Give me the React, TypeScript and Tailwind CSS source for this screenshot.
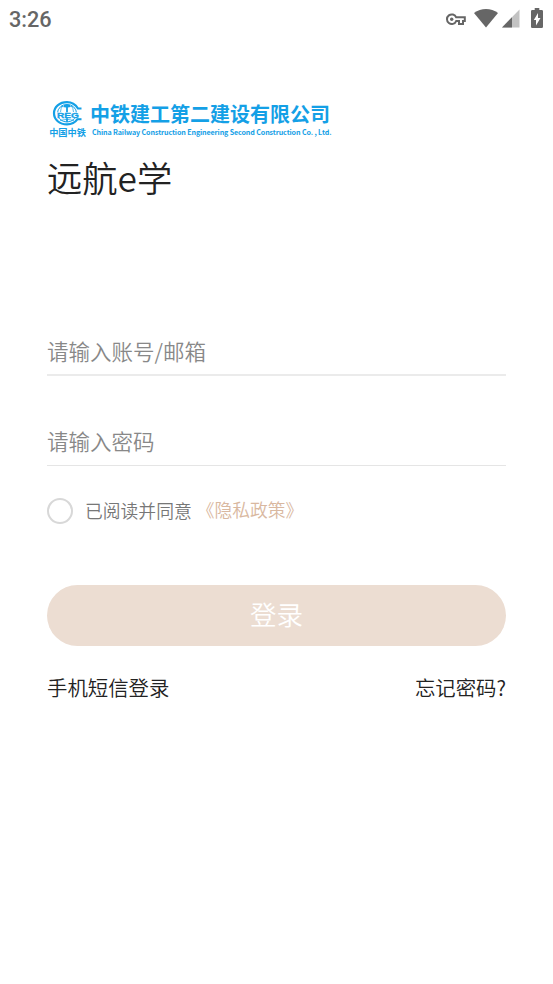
import React, { useState } from 'react';

function StatusBar() {
  return (
    <header className="flex h-10 items-start justify-between pl-[9px] pr-[10px] pt-[7px] text-[#666]">
      <span className="font-['Roboto',sans-serif] text-[21.7px] font-medium leading-[26px]">3:26</span>
      <div className="flex pt-px">
        {/* Saved password key */}
        <svg width="21" height="20" viewBox="0 0 21 20" fill="none" stroke="currentColor" strokeWidth="2">
          <path d="M11.2 9.3A4.8 4.8 0 1 0 11.2 13.1H14V16H18V13.1H19.8V9.3Z" />
          <circle cx="6.7" cy="11.2" r="1.7" fill="currentColor" stroke="none" />
        </svg>
        <svg className="ml-2" width="24" height="20" viewBox="0 0 24 20" fill="currentColor">
          <path d="M0 5C7-.4 17-.4 24 5L12 19.5Z" />
        </svg>
        <svg className="ml-1" width="18" height="20" viewBox="0 0 18 20" fill="currentColor">
          <path d="M17.5 1.5V19.5H0Z" opacity=".4" />
          <path d="M10 9.2V19.5H0Z" />
        </svg>
        <svg className="ml-[11px]" width="12" height="20" viewBox="0 0 12 20">
          <path fill="currentColor" d="M3.7 0H8.3V2H10.7Q12 2 12 3.3V18.7Q12 20 10.7 20H1.3Q0 20 0 18.7V3.3Q0 2 1.3 2H3.7Z" />
          <path fill="#fff" d="M7 5V10H9.5L5 17.5V12H2.8Z" />
        </svg>
      </div>
    </header>
  );
}

function CompanyLogo() {
  return (
    <div className="flex h-[39px] text-[#14a0e6]">
      <div className="flex w-[43px] shrink-0 flex-col items-center pr-[3px]">
        <svg width="32" height="26" viewBox="0 0 32 26" fill="none" stroke="currentColor">
          <path d="M30.5 8.5H27C24 3.8 20.5 2.2 16 2.2C8.5 2.2 3 7 3 13.3S8.5 24.4 16 24.4C20.5 24.4 24 22.8 26.5 19.2H30.5" strokeWidth="2.2" />
          <ellipse cx="16" cy="13.2" rx="9.5" ry="8.8" strokeWidth="1" />
          <path d="M10 6Q16 9 21.5 6M9 20.5Q16 18 23 20.5M12 5Q9.5 8.5 9.5 12M20 5Q22.5 8.5 22.5 12" strokeWidth=".7" />
          <path d="M16 5V22M13 6H19" strokeWidth="1.8" />
          <path d="M5.5 12.3H31V18.2H5.5Z" fill="#fff" stroke="none" />
          <text x="6" y="18" fill="currentColor" stroke="currentColor" strokeWidth=".3" fontFamily="Liberation Sans" fontSize="7.6" fontWeight="700" textLength="22" lengthAdjust="spacingAndGlyphs">REG</text>
        </svg>
        <span className="ml-px whitespace-nowrap text-[9.2px] font-bold leading-[12px]">中国中铁</span>
      </div>
      <div className="flex flex-col whitespace-nowrap">
        <span className="text-[20px] font-bold leading-[27px]">中铁建工第二建设有限公司</span>
        <span className="pl-[2px] text-[7.12px] font-bold leading-[10px] tracking-[-0.11px]">China Railway Construction Engineering Second Construction Co. , Ltd.</span>
      </div>
    </div>
  );
}

export default function App() {
  const [account, setAccount] = useState('');
  const [password, setPassword] = useState('');
  const [agreed, setAgreed] = useState(false);

  return (
    <div className="flex min-h-[984px] w-full flex-col bg-white font-['Noto_Sans_CJK_SC',sans-serif] font-[350]">
      <StatusBar />
      <main className="flex flex-col px-[47px] pt-[60px]">
        <CompanyLogo />
        <h1 className="mt-3 h-[52px] text-[35.3px] leading-[52px] text-[#222]">远航e学</h1>

        <form className="mt-[127px] flex flex-col" onSubmit={(e) => e.preventDefault()}>
          <input
            type="text"
            value={account}
            onChange={(e) => setAccount(e.target.value)}
            placeholder="请输入账号/邮箱"
            className="h-[46px] w-full border-b-2 border-[#ebebeb] pb-1 text-[21.5px] text-[#222] outline-none placeholder:text-[#888]"
          />
          <input
            type="password"
            value={password}
            onChange={(e) => setPassword(e.target.value)}
            placeholder="请输入密码"
            className="mt-[44px] h-[46px] w-full border-b border-[#e5e5e5] pb-[5px] text-[21.5px] text-[#222] outline-none placeholder:text-[#888]"
          />

          <div className="mt-[32px] flex h-[26px] items-center text-[17.8px]">
            <button
              type="button"
              aria-label="已阅读并同意"
              onClick={() => setAgreed(!agreed)}
              className={agreed ? 'size-[26px] rounded-full border-2 border-[#d7b79f] bg-[#d7b79f]' : 'size-[26px] rounded-full border-2 border-[#d8d8d8]'}
            />
            <span className="ml-3 pb-px text-[#777]">已阅读并同意</span>
            <a href="#" className="ml-[5px] pb-[3px] text-[17.8px] text-[#d9b8a0]">《隐私政策》</a>
          </div>

          <button type="submit" className="mt-[61px] h-[61px] rounded-full bg-[#ecddd2] pb-1 text-[26.5px] text-white">
            登录
          </button>
        </form>

        <div className="mt-[26px] flex h-[30px] items-center justify-between text-[20.4px] text-[#222]">
          <a href="#">手机短信登录</a>
          <a href="#">忘记密码?</a>
        </div>
      </main>
    </div>
  );
}
